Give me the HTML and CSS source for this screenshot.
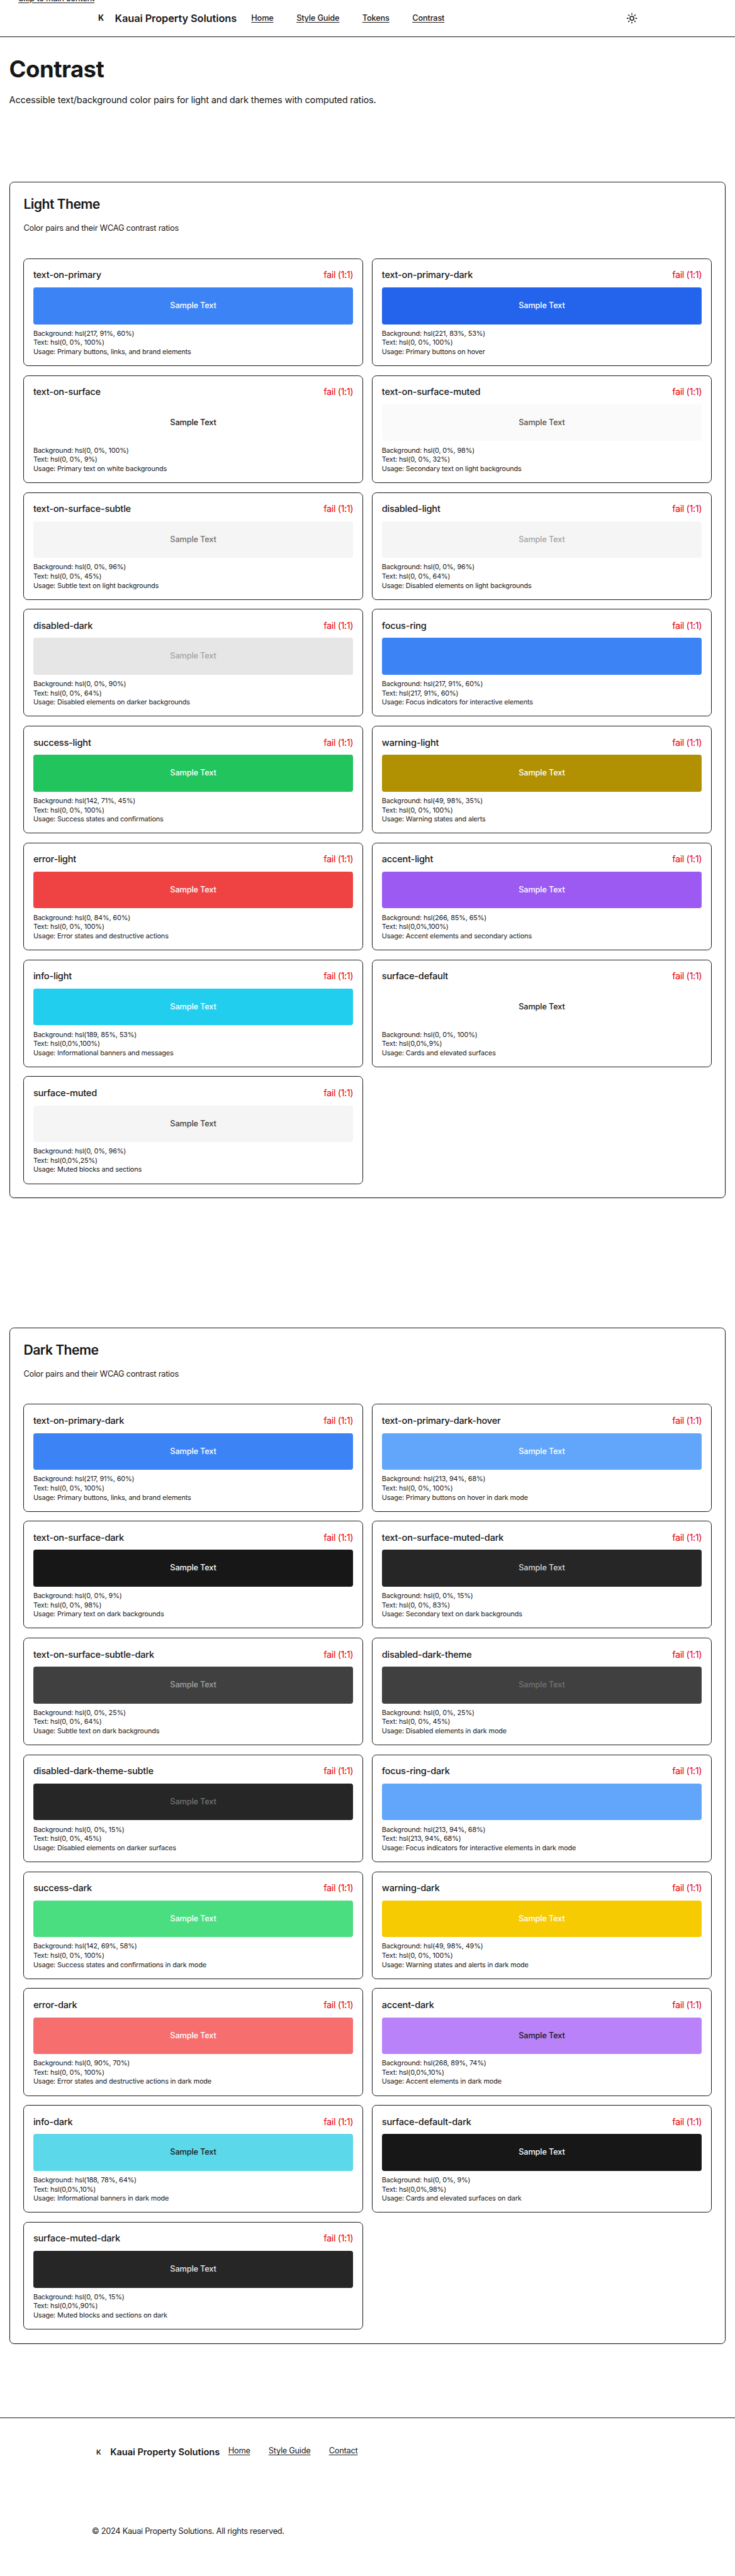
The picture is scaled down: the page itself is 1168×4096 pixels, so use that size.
FILE: index.html
```html
<!DOCTYPE html>
<html lang="en">
<head>
<meta charset="utf-8">
<title>Contrast</title>
<link rel="stylesheet" href="styles.css">
</head>
<body>
<a class="skip-link" href="#main">Skip to main content</a>
<header class="site-header">
  <div class="container header-row">
    <div class="brand"><span class="brand-mark">K</span><span class="brand-name">Kauai Property Solutions</span></div>
    <nav class="nav">
      <a href="#">Home</a><a href="#">Style Guide</a><a href="#">Tokens</a><a href="#">Contrast</a>
    </nav>
    <button class="theme-toggle" aria-label="Toggle theme">
      <svg viewBox="0 0 24 24" fill="none" stroke="currentColor" stroke-width="2" stroke-linecap="round" stroke-linejoin="round"><circle cx="12" cy="12" r="4"/><path d="M12 2v2M12 20v2M4.93 4.93l1.41 1.41M17.66 17.66l1.41 1.41M2 12h2M20 12h2M6.34 17.66l-1.41 1.41M19.07 4.93l-1.41 1.41"/></svg>
    </button>
  </div>
</header>
<main id="main" class="page">
  <h1>Contrast</h1>
  <p class="lead">Accessible text/background color pairs for light and dark themes with computed ratios.</p>

  <section class="panel">
    <h2>Light Theme</h2>
    <p class="panel-desc">Color pairs and their WCAG contrast ratios</p>
    <div class="grid">
      <article class="card"><div class="card-head"><h3>text-on-primary</h3><span class="fail">fail (1:1)</span></div><div class="swatch primary">Sample Text</div><div class="meta"><p>Background: hsl(217, 91%, 60%)</p><p>Text: hsl(0, 0%, 100%)</p><p>Usage: Primary buttons, links, and brand elements</p></div></article>
      <article class="card"><div class="card-head"><h3>text-on-primary-dark</h3><span class="fail">fail (1:1)</span></div><div class="swatch primary-deep">Sample Text</div><div class="meta"><p>Background: hsl(221, 83%, 53%)</p><p>Text: hsl(0, 0%, 100%)</p><p>Usage: Primary buttons on hover</p></div></article>
      <article class="card"><div class="card-head"><h3>text-on-surface</h3><span class="fail">fail (1:1)</span></div><div class="swatch surface">Sample Text</div><div class="meta"><p>Background: hsl(0, 0%, 100%)</p><p>Text: hsl(0, 0%, 9%)</p><p>Usage: Primary text on white backgrounds</p></div></article>
      <article class="card"><div class="card-head"><h3>text-on-surface-muted</h3><span class="fail">fail (1:1)</span></div><div class="swatch surface-soft">Sample Text</div><div class="meta"><p>Background: hsl(0, 0%, 98%)</p><p>Text: hsl(0, 0%, 32%)</p><p>Usage: Secondary text on light backgrounds</p></div></article>
      <article class="card"><div class="card-head"><h3>text-on-surface-subtle</h3><span class="fail">fail (1:1)</span></div><div class="swatch subtle">Sample Text</div><div class="meta"><p>Background: hsl(0, 0%, 96%)</p><p>Text: hsl(0, 0%, 45%)</p><p>Usage: Subtle text on light backgrounds</p></div></article>
      <article class="card"><div class="card-head"><h3>disabled-light</h3><span class="fail">fail (1:1)</span></div><div class="swatch disabled-light">Sample Text</div><div class="meta"><p>Background: hsl(0, 0%, 96%)</p><p>Text: hsl(0, 0%, 64%)</p><p>Usage: Disabled elements on light backgrounds</p></div></article>
      <article class="card"><div class="card-head"><h3>disabled-dark</h3><span class="fail">fail (1:1)</span></div><div class="swatch disabled-dark">Sample Text</div><div class="meta"><p>Background: hsl(0, 0%, 90%)</p><p>Text: hsl(0, 0%, 64%)</p><p>Usage: Disabled elements on darker backgrounds</p></div></article>
      <article class="card"><div class="card-head"><h3>focus-ring</h3><span class="fail">fail (1:1)</span></div><div class="swatch focus"></div><div class="meta"><p>Background: hsl(217, 91%, 60%)</p><p>Text: hsl(217, 91%, 60%)</p><p>Usage: Focus indicators for interactive elements</p></div></article>
      <article class="card"><div class="card-head"><h3>success-light</h3><span class="fail">fail (1:1)</span></div><div class="swatch success">Sample Text</div><div class="meta"><p>Background: hsl(142, 71%, 45%)</p><p>Text: hsl(0, 0%, 100%)</p><p>Usage: Success states and confirmations</p></div></article>
      <article class="card"><div class="card-head"><h3>warning-light</h3><span class="fail">fail (1:1)</span></div><div class="swatch warning">Sample Text</div><div class="meta"><p>Background: hsl(49, 98%, 35%)</p><p>Text: hsl(0, 0%, 100%)</p><p>Usage: Warning states and alerts</p></div></article>
      <article class="card"><div class="card-head"><h3>error-light</h3><span class="fail">fail (1:1)</span></div><div class="swatch error">Sample Text</div><div class="meta"><p>Background: hsl(0, 84%, 60%)</p><p>Text: hsl(0, 0%, 100%)</p><p>Usage: Error states and destructive actions</p></div></article>
      <article class="card"><div class="card-head"><h3>accent-light</h3><span class="fail">fail (1:1)</span></div><div class="swatch accent">Sample Text</div><div class="meta"><p>Background: hsl(266, 85%, 65%)</p><p>Text: hsl(0,0%,100%)</p><p>Usage: Accent elements and secondary actions</p></div></article>
      <article class="card"><div class="card-head"><h3>info-light</h3><span class="fail">fail (1:1)</span></div><div class="swatch info">Sample Text</div><div class="meta"><p>Background: hsl(189, 85%, 53%)</p><p>Text: hsl(0,0%,100%)</p><p>Usage: Informational banners and messages</p></div></article>
      <article class="card"><div class="card-head"><h3>surface-default</h3><span class="fail">fail (1:1)</span></div><div class="swatch surface">Sample Text</div><div class="meta"><p>Background: hsl(0, 0%, 100%)</p><p>Text: hsl(0,0%,9%)</p><p>Usage: Cards and elevated surfaces</p></div></article>
      <article class="card"><div class="card-head"><h3>surface-muted</h3><span class="fail">fail (1:1)</span></div><div class="swatch muted">Sample Text</div><div class="meta"><p>Background: hsl(0, 0%, 96%)</p><p>Text: hsl(0,0%,25%)</p><p>Usage: Muted blocks and sections</p></div></article>
    </div>
  </section>

  <section class="panel">
    <h2>Dark Theme</h2>
    <p class="panel-desc">Color pairs and their WCAG contrast ratios</p>
    <div class="grid">
      <article class="card"><div class="card-head"><h3>text-on-primary-dark</h3><span class="fail">fail (1:1)</span></div><div class="swatch primary">Sample Text</div><div class="meta"><p>Background: hsl(217, 91%, 60%)</p><p>Text: hsl(0, 0%, 100%)</p><p>Usage: Primary buttons, links, and brand elements</p></div></article>
      <article class="card"><div class="card-head"><h3>text-on-primary-dark-hover</h3><span class="fail">fail (1:1)</span></div><div class="swatch primary-hover">Sample Text</div><div class="meta"><p>Background: hsl(213, 94%, 68%)</p><p>Text: hsl(0, 0%, 100%)</p><p>Usage: Primary buttons on hover in dark mode</p></div></article>
      <article class="card"><div class="card-head"><h3>text-on-surface-dark</h3><span class="fail">fail (1:1)</span></div><div class="swatch night">Sample Text</div><div class="meta"><p>Background: hsl(0, 0%, 9%)</p><p>Text: hsl(0, 0%, 98%)</p><p>Usage: Primary text on dark backgrounds</p></div></article>
      <article class="card"><div class="card-head"><h3>text-on-surface-muted-dark</h3><span class="fail">fail (1:1)</span></div><div class="swatch night-soft">Sample Text</div><div class="meta"><p>Background: hsl(0, 0%, 15%)</p><p>Text: hsl(0, 0%, 83%)</p><p>Usage: Secondary text on dark backgrounds</p></div></article>
      <article class="card"><div class="card-head"><h3>text-on-surface-subtle-dark</h3><span class="fail">fail (1:1)</span></div><div class="swatch night-subtle">Sample Text</div><div class="meta"><p>Background: hsl(0, 0%, 25%)</p><p>Text: hsl(0, 0%, 64%)</p><p>Usage: Subtle text on dark backgrounds</p></div></article>
      <article class="card"><div class="card-head"><h3>disabled-dark-theme</h3><span class="fail">fail (1:1)</span></div><div class="swatch night-disabled">Sample Text</div><div class="meta"><p>Background: hsl(0, 0%, 25%)</p><p>Text: hsl(0, 0%, 45%)</p><p>Usage: Disabled elements in dark mode</p></div></article>
      <article class="card"><div class="card-head"><h3>disabled-dark-theme-subtle</h3><span class="fail">fail (1:1)</span></div><div class="swatch night-disabled-subtle">Sample Text</div><div class="meta"><p>Background: hsl(0, 0%, 15%)</p><p>Text: hsl(0, 0%, 45%)</p><p>Usage: Disabled elements on darker surfaces</p></div></article>
      <article class="card"><div class="card-head"><h3>focus-ring-dark</h3><span class="fail">fail (1:1)</span></div><div class="swatch primary-hover"></div><div class="meta"><p>Background: hsl(213, 94%, 68%)</p><p>Text: hsl(213, 94%, 68%)</p><p>Usage: Focus indicators for interactive elements in dark mode</p></div></article>
      <article class="card"><div class="card-head"><h3>success-dark</h3><span class="fail">fail (1:1)</span></div><div class="swatch success-dark">Sample Text</div><div class="meta"><p>Background: hsl(142, 69%, 58%)</p><p>Text: hsl(0, 0%, 100%)</p><p>Usage: Success states and confirmations in dark mode</p></div></article>
      <article class="card"><div class="card-head"><h3>warning-dark</h3><span class="fail">fail (1:1)</span></div><div class="swatch warning-dark">Sample Text</div><div class="meta"><p>Background: hsl(49, 98%, 49%)</p><p>Text: hsl(0, 0%, 100%)</p><p>Usage: Warning states and alerts in dark mode</p></div></article>
      <article class="card"><div class="card-head"><h3>error-dark</h3><span class="fail">fail (1:1)</span></div><div class="swatch error-dark">Sample Text</div><div class="meta"><p>Background: hsl(0, 90%, 70%)</p><p>Text: hsl(0, 0%, 100%)</p><p>Usage: Error states and destructive actions in dark mode</p></div></article>
      <article class="card"><div class="card-head"><h3>accent-dark</h3><span class="fail">fail (1:1)</span></div><div class="swatch accent-dark">Sample Text</div><div class="meta"><p>Background: hsl(268, 89%, 74%)</p><p>Text: hsl(0,0%,10%)</p><p>Usage: Accent elements in dark mode</p></div></article>
      <article class="card"><div class="card-head"><h3>info-dark</h3><span class="fail">fail (1:1)</span></div><div class="swatch info-dark">Sample Text</div><div class="meta"><p>Background: hsl(188, 78%, 64%)</p><p>Text: hsl(0,0%,10%)</p><p>Usage: Informational banners in dark mode</p></div></article>
      <article class="card"><div class="card-head"><h3>surface-default-dark</h3><span class="fail">fail (1:1)</span></div><div class="swatch night">Sample Text</div><div class="meta"><p>Background: hsl(0, 0%, 9%)</p><p>Text: hsl(0,0%,98%)</p><p>Usage: Cards and elevated surfaces on dark</p></div></article>
      <article class="card"><div class="card-head"><h3>surface-muted-dark</h3><span class="fail">fail (1:1)</span></div><div class="swatch night-muted">Sample Text</div><div class="meta"><p>Background: hsl(0, 0%, 15%)</p><p>Text: hsl(0,0%,90%)</p><p>Usage: Muted blocks and sections on dark</p></div></article>
    </div>
  </section>
</main>
<footer class="site-footer">
  <div class="container">
    <div class="footer-row">
      <div class="brand brand-small"><span class="brand-mark">K</span><span class="brand-name">Kauai Property Solutions</span></div>
      <nav class="nav footer-nav"><a href="#">Home</a><a href="#">Style Guide</a><a href="#">Contact</a></nav>
    </div>
    <p class="copyright">© 2024 Kauai Property Solutions. All rights reserved.</p>
  </div>
</footer>
</body>
</html>
```
FILE: styles.css
```css
/* 1rem = 14.6px: the whole scale derives from the root size */
html { font-size: 14.6px; }
* { box-sizing: border-box; margin: 0; padding: 0; }
body {
  font-family: Inter, "Liberation Sans", sans-serif;
  font-size: 1rem;
  line-height: 1.6;
  color: #171717;
  background: #fff;
}
a { color: inherit; text-underline-offset: 0.16em; }

.skip-link {
  position: absolute;
  left: 2rem;
  top: -0.75rem;
  font-size: 0.875rem;
  font-weight: 500;
  line-height: 1.25rem;
  letter-spacing: -0.014em;
}
.container { width: 60rem; margin: 0 auto; }

.site-header { border-bottom: 1px solid #171717; }
.header-row { display: flex; align-items: center; height: 4rem; }
.brand { display: flex; align-items: center; gap: 0.5rem; white-space: nowrap; }
.brand-mark { width: 2rem; text-align: center; font-size: 0.875rem; font-weight: 700; }
.brand-name { font-size: 1.125rem; font-weight: 600; letter-spacing: -0.007em; width: 13.35rem; }
.nav { display: flex; gap: 2.5rem; margin-left: 1.5rem; font-size: 0.875rem; font-weight: 500; line-height: 1.25rem; letter-spacing: -0.014em; white-space: nowrap; }
.theme-toggle {
  display: flex; align-items: center; justify-content: center;
  width: 2.5rem; height: 2.5rem; margin-left: auto;
  border: 0; background: none; color: inherit;
}
.theme-toggle svg { width: 1.25rem; height: 1.25rem; }

.page { padding: 2rem 1rem 0; }
h1 { font-size: 2.5rem; line-height: 3rem; font-weight: 700; letter-spacing: -0.014em; }
.lead { margin-top: 1rem; font-size: 1rem; line-height: 1.75rem; letter-spacing: -0.0135em; }

.panel {
  margin-top: 8rem;
  padding: calc(1.5625rem - 1px);
  border: 1px solid #171717;
  border-radius: 0.5rem;
  box-shadow: 0 1px 2px rgba(0, 0, 0, 0.1);
}
.panel + .panel { margin-top: 14.07rem; }
h2 { font-size: 1.45rem; line-height: 1.75rem; font-weight: 600; letter-spacing: -0.026em; }
.panel-desc { margin: 1.0625rem 0 2.56rem; font-size: 0.875rem; line-height: 1.4rem; letter-spacing: -0.018em; }
.grid { display: grid; grid-template-columns: 1fr 1fr; gap: 1.004rem 1rem; }

.card { padding: calc(1.0625rem - 1px); border: 1px solid #171717; border-radius: 0.5rem; }
.card-head { display: flex; justify-content: space-between; height: 1.6rem; margin-bottom: 0.5rem; }
h3 { font-size: 1rem; line-height: 1.6rem; font-weight: 500; letter-spacing: -0.0155em; }
.fail { color: #e7000b; letter-spacing: -0.03em; }
.swatch {
  display: flex; align-items: center; justify-content: center;
  height: 4rem; margin-bottom: 0.5rem;
  border-radius: 0.25rem;
  font-size: 0.875rem; font-weight: 500; letter-spacing: -0.012em;
}
.meta { font-size: 0.75rem; line-height: 1rem; letter-spacing: -0.017em; }

.primary { background: hsl(217, 91%, 60%); color: #fff; }
.primary-deep { background: hsl(221, 83%, 53%); color: #fff; }
.primary-hover { background: hsl(213, 94%, 68%); color: #fff; }
.surface { background: #fff; color: hsl(0, 0%, 9%); }
.surface-soft { background: hsl(0, 0%, 98%); color: hsl(0, 0%, 32%); }
.subtle { background: hsl(0, 0%, 96%); color: hsl(0, 0%, 45%); }
.disabled-light { background: hsl(0, 0%, 96%); color: hsl(0, 0%, 64%); }
.disabled-dark { background: hsl(0, 0%, 90%); color: hsl(0, 0%, 64%); }
.focus { background: hsl(217, 91%, 60%); }
.success { background: hsl(142, 71%, 45%); color: #fff; }
.warning { background: hsl(49, 98%, 35%); color: #fff; }
.error { background: hsl(0, 84%, 60%); color: #fff; }
.accent { background: hsl(266, 85%, 65%); color: #fff; }
.info { background: hsl(189, 85%, 53%); color: #fff; }
.muted { background: hsl(0, 0%, 96%); color: hsl(0, 0%, 25%); }
.night { background: hsl(0, 0%, 9%); color: hsl(0, 0%, 98%); }
.night-soft { background: hsl(0, 0%, 15%); color: hsl(0, 0%, 83%); }
.night-subtle { background: hsl(0, 0%, 25%); color: hsl(0, 0%, 64%); }
.night-disabled { background: hsl(0, 0%, 25%); color: hsl(0, 0%, 45%); }
.night-disabled-subtle { background: hsl(0, 0%, 15%); color: hsl(0, 0%, 45%); }
.night-muted { background: hsl(0, 0%, 15%); color: hsl(0, 0%, 90%); }
.success-dark { background: hsl(142, 69%, 58%); color: #fff; }
.warning-dark { background: hsl(49, 98%, 49%); color: #fff; }
.error-dark { background: hsl(0, 90%, 70%); color: #fff; }
.accent-dark { background: hsl(268, 89%, 74%); color: hsl(0, 0%, 10%); }
.info-dark { background: hsl(188, 78%, 64%); color: hsl(0, 0%, 10%); }

.site-footer { margin-top: 8rem; padding: 3rem 0 4rem; border-top: 1px solid #171717; }
.footer-row { display: flex; align-items: flex-start; height: 8.75rem; }
.brand-small { height: 1.5rem; }
.brand-small .brand-mark { width: 1.5rem; font-size: 0.75rem; font-weight: 600; }
.brand-small .brand-name { font-size: 1rem; width: 11.85rem; letter-spacing: -0.002em; }
.footer-nav { gap: 2rem; margin-left: 1rem; font-weight: 400; letter-spacing: -0.019em; }
.copyright { font-size: 0.875rem; line-height: 1.25rem; letter-spacing: -0.021em; }
```
